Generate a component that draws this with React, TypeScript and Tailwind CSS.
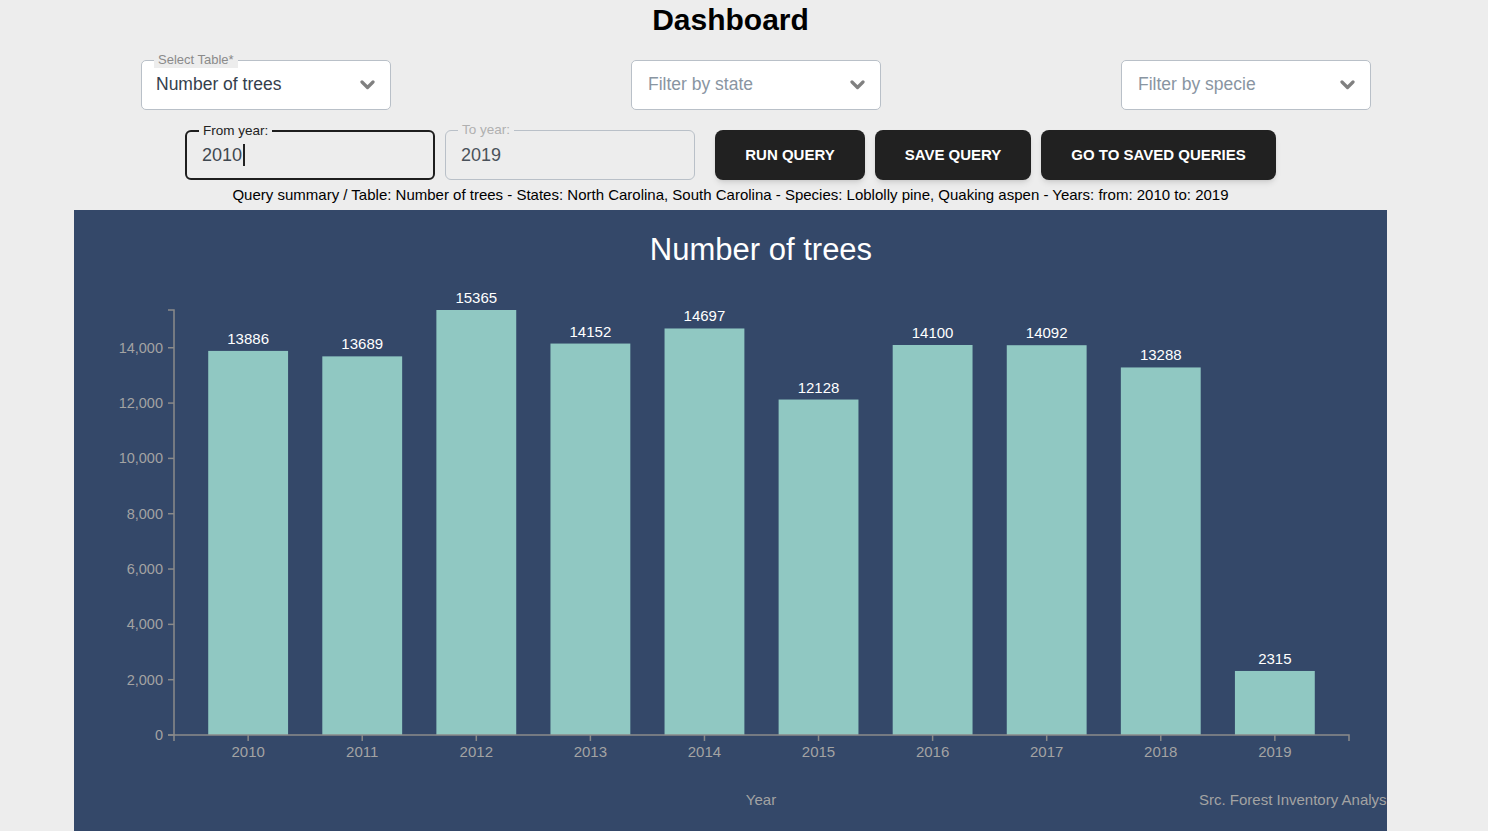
const years = [2010, 2011, 2012, 2013, 2014, 2015, 2016, 2017, 2018, 2019];
const values = [13886, 13689, 15365, 14152, 14697, 12128, 14100, 14092, 13288, 2315];

function Chevron() {
  return (
    <svg width="15" height="10" viewBox="0 0 15 10" className="shrink-0">
      <polyline points="2,2 7.5,7.5 13,2" fill="none" stroke="#808080" strokeWidth="3.2" strokeLinecap="round" strokeLinejoin="round" />
    </svg>
  );
}

function SelectBox({ label, value, placeholder }: { label?: string; value?: string; placeholder?: string }) {
  return (
    <div className="relative w-[250px] h-[50px] bg-white border border-[#b9c0c8] rounded-[5px] flex items-center justify-between pl-[14px] pr-[15px]">
      {label && (
        <span className="absolute -top-[9px] left-[12px] px-[4px] bg-[#ededed] text-[13px] leading-[16px] text-[#8a8a8a]">
          {label}
        </span>
      )}
      {value ? (
        <span className="text-[17.5px] leading-[22px] -mt-[2px] text-[#34404c]">{value}</span>
      ) : (
        <span className="text-[17.5px] leading-[22px] -mt-[2px] text-[#8995a2] pl-[2px]">{placeholder}</span>
      )}
      <Chevron />
    </div>
  );
}

function BarChart() {
  const left = 100;
  const right = 1275;
  const top = 100;
  const bottom = 525;
  const max = 15365;
  const y = (v: number) => bottom - (v / max) * (bottom - top);
  const step = (right - left) / 10.3;
  const bw = step * 0.7;
  const x0 = left + step * 0.3;
  const ticks = [0, 2000, 4000, 6000, 8000, 10000, 12000, 14000];

  return (
    <svg width="1313" height="640" className="block">
      <text x={687} y={42} textAnchor="middle" dominantBaseline="middle" fill="#ffffff" fontSize="31">
        Number of trees
      </text>
      {values.map((v, i) => {
        const bx = x0 + i * step;
        return (
          <g key={i}>
            <rect x={bx} y={y(v)} width={bw} height={bottom - y(v)} fill="#90c8c2" />
            <text x={bx + bw / 2} y={y(v) - 11} textAnchor="middle" dominantBaseline="middle" fill="#ffffff" fontSize="15">
              {v}
            </text>
            <line x1={bx + bw / 2} x2={bx + bw / 2} y1={bottom} y2={bottom + 6} stroke="#8a8a8a" strokeWidth="1.5" />
            <text x={bx + bw / 2} y={543} textAnchor="middle" dominantBaseline="middle" fill="#a3a3a3" fontSize="15">
              {years[i]}
            </text>
          </g>
        );
      })}
      {ticks.map((t) => (
        <g key={t}>
          <line x1={94} x2={100} y1={y(t)} y2={y(t)} stroke="#8a8a8a" strokeWidth="1.5" />
          <text x={89} y={y(t) + 1} textAnchor="end" dominantBaseline="middle" fill="#a3a3a3" fontSize="14.5">
            {t.toLocaleString("en-US")}
          </text>
        </g>
      ))}
      <path d={`M94,${top}H${left}V${bottom}H94`} fill="none" stroke="#8a8a8a" strokeWidth="1.5" />
      <path d={`M${left},${bottom + 6}V${bottom}H${right}V${bottom + 6}`} fill="none" stroke="#8a8a8a" strokeWidth="1.5" />
      <text x={687} y={591} textAnchor="middle" dominantBaseline="middle" fill="#a3a3a3" fontSize="15">
        Year
      </text>
      <text x={1125} y={591} dominantBaseline="middle" fill="#a3a3a3" fontSize="15">
        Src. Forest Inventory Analysis
      </text>
    </svg>
  );
}

export default function App() {
  return (
    <div className="min-h-screen bg-[#ededed] overflow-hidden" style={{ fontFamily: '"Liberation Sans", Arial, sans-serif' }}>
      <div className="w-[1313px] ml-[74px] flex flex-col">
        <h1 className="pt-[3px] text-center text-[30px] leading-[34px] font-bold text-black">Dashboard</h1>

        <div className="mt-[23px] flex gap-[240px] pl-[67px]">
          <SelectBox label="Select Table*" value="Number of trees" />
          <SelectBox placeholder="Filter by state" />
          <SelectBox placeholder="Filter by specie" />
        </div>

        <div className="mt-[20px] flex justify-center items-center">
          <div className="relative w-[250px] h-[50px] border-2 border-[#1e1e1e] rounded-[6px] flex items-center pl-[15px]">
            <span className="absolute -top-[9px] left-[12px] px-[4px] bg-[#ededed] text-[13.5px] leading-[16px] text-[#222]">
              From year:
            </span>
            <span className="text-[18px] text-[#3f4850]">2010</span>
            <span className="w-[2px] h-[22px] bg-[#222] ml-[1px]" />
          </div>
          <div className="relative ml-[10px] w-[250px] h-[50px] border border-[#b9c0c8] rounded-[6px] flex items-center pl-[15px]">
            <span className="absolute -top-[9px] left-[12px] px-[4px] bg-[#ededed] text-[13.5px] leading-[16px] text-[#b0b0b0]">
              To year:
            </span>
            <span className="text-[18px] text-[#4a525a]">2019</span>
          </div>
          <button className="ml-[20px] w-[150px] h-[50px] rounded-[8px] bg-[#212121] text-white text-[15px] font-bold shadow-md">
            RUN QUERY
          </button>
          <button className="ml-[10px] w-[156px] h-[50px] rounded-[8px] bg-[#212121] text-white text-[15px] font-bold shadow-md">
            SAVE QUERY
          </button>
          <button className="ml-[10px] w-[235px] h-[50px] rounded-[8px] bg-[#212121] text-white text-[15px] font-bold shadow-md">
            GO TO SAVED QUERIES
          </button>
        </div>

        <div className="h-[30px] flex items-center justify-center text-[15px] text-black">
          Query summary / Table: Number of trees - States: North Carolina, South Carolina - Species: Loblolly pine, Quaking aspen - Years: from: 2010 to: 2019
        </div>

        <div className="bg-[#344869] overflow-hidden h-[640px]">
          <BarChart />
        </div>
      </div>
    </div>
  );
}
